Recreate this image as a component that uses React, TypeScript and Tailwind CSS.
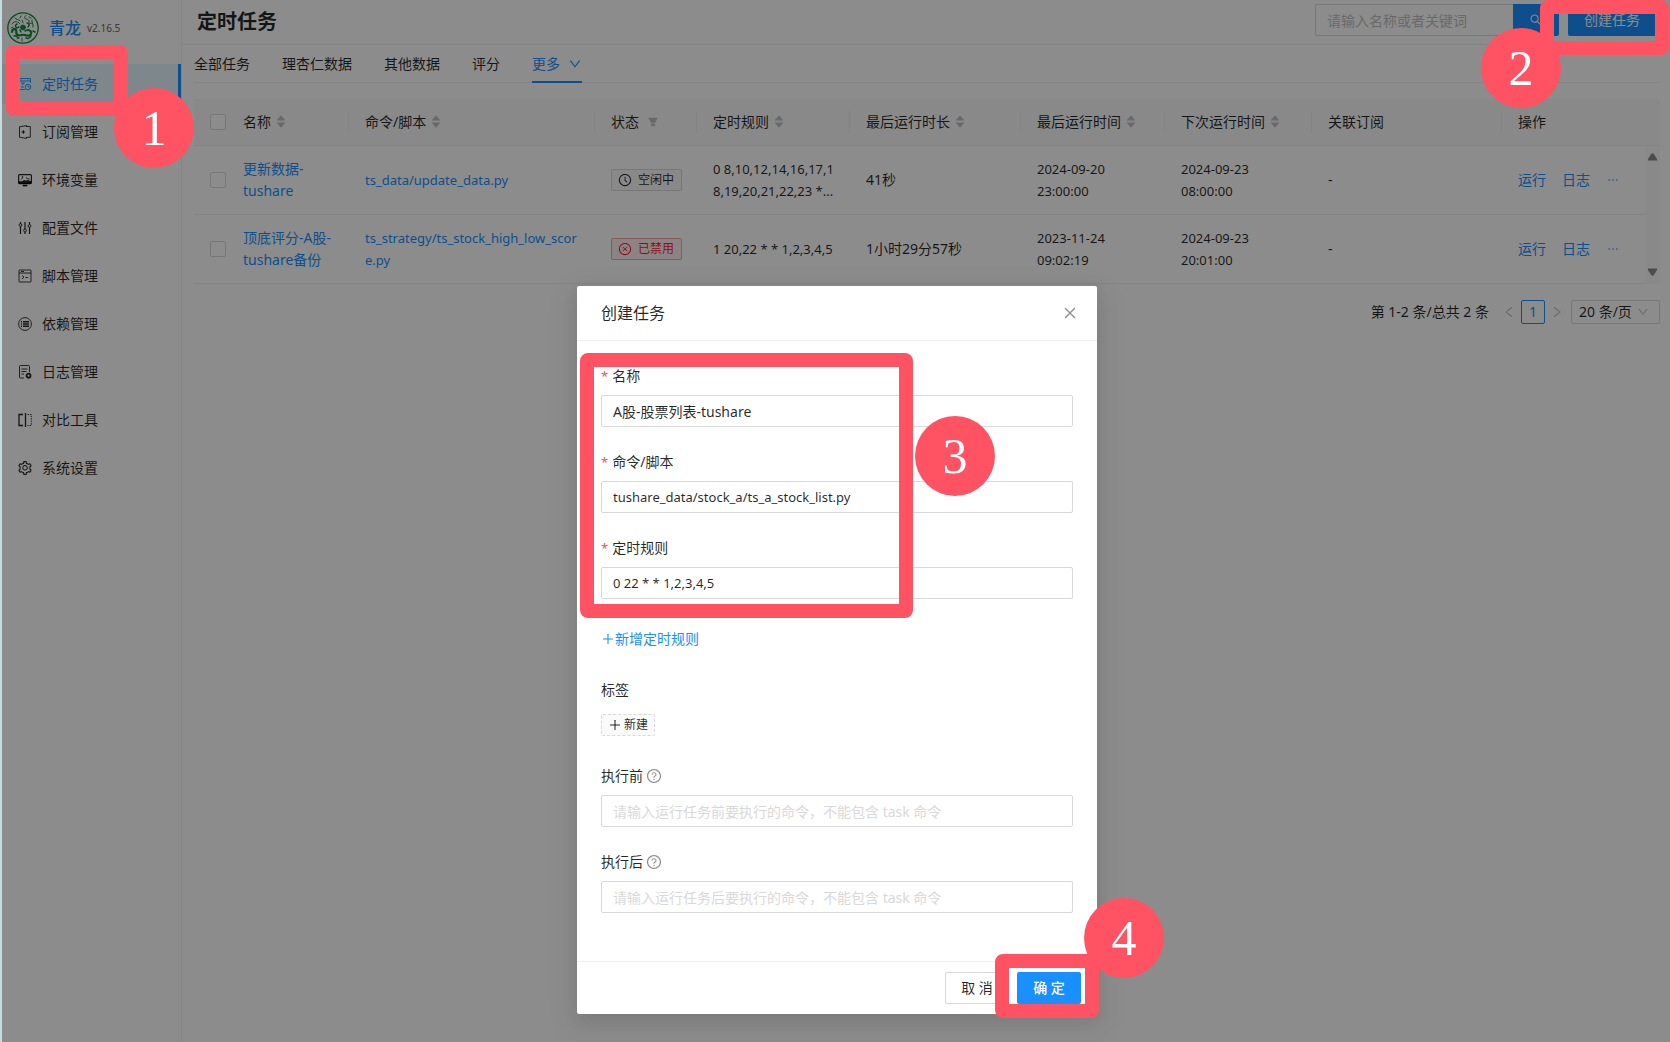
import React from 'react'
import {
    AiFillCaretDown,
    AiFillCaretUp,
    AiFillFilter,
    AiOutlineClockCircle,
    AiOutlineClose,
    AiOutlineCloseCircle,
    AiOutlineDown,
    AiOutlineEllipsis,
    AiOutlineLeft,
    AiOutlinePlus,
    AiOutlineQuestionCircle,
    AiOutlineRight,
    AiOutlineSearch,
    AiOutlineSetting,
} from 'react-icons/ai'

type IconProps = { children: React.ReactNode }

const MenuIcon = ({ children }: IconProps) => (
    <svg className="w-3.5 h-3.5 shrink-0" viewBox="0 0 14 14" fill="none" stroke="currentColor" strokeWidth=".9">
        {children}
    </svg>
)

const menu = [
    {
        label: '定时任务',
        icon: (
            <MenuIcon>
                <path d="M12.5 6V1.5H.5v11H7M.5 4h12M3 2.5v.8M10 2.5v.8M3 6h3.5L4 8M3 10h3" />
                <circle cx="10" cy="10" r="2.8" />
                <path d="M10 8.5V10h1.5" />
            </MenuIcon>
        ),
    },
    {
        label: '订阅管理',
        icon: (
            <MenuIcon>
                <path d="M8.5 2V.6L1.500 1.800v10.400L8.500 13.400V12" />
                <path d="M8.500 1.500h3.800v10.800H8.500" />
                <path d="M3.500 7h3.600M5.300 5.200v3.600" strokeWidth="1.200" />
            </MenuIcon>
        ),
    },
    {
        label: '环境变量',
        icon: (
            <MenuIcon>
                <rect x=".6" y="1.600" width="12.800" height="9" rx="1" strokeWidth="1.200" />
                <path d="M1 8.800h3l2-1.300 2 .6 2-.6 3 1.300v1.700H1zM5 12.200h4v.8H5z" fill="currentColor" />
                <path d="M3 6.500l1.500-1.500M8 4.500l2 1.500h1.500" />
                <circle cx="4.500" cy="4" r=".5" />
            </MenuIcon>
        ),
    },
    {
        label: '配置文件',
        icon: (
            <MenuIcon>
                <path d="M2.500 1v1.500M2.500 5.500V13M7 1v7M7 11v2M11.500 1v2.500M11.500 6.500V13" strokeWidth="1.200" />
                <circle cx="2.500" cy="4" r="1.400" />
                <circle cx="7" cy="9.500" r="1.400" />
                <circle cx="11.500" cy="5" r="1.400" />
            </MenuIcon>
        ),
    },
    {
        label: '脚本管理',
        icon: (
            <MenuIcon>
                <rect x="1" y="1" width="12" height="12" rx=".5" />
                <path d="M1 4h12M3 2.500h3M4 6.500l2 1.700-2 1.800M7.500 8.500h2.500" />
            </MenuIcon>
        ),
    },
    {
        label: '依赖管理',
        icon: (
            <MenuIcon>
                <circle cx="7" cy="7" r="6.400" />
                <path d="M3 4.700h1M3 7h1M3 9.300h1M5 4.700h6M5 7h6M5 9.300h6" strokeWidth="1.600" />
            </MenuIcon>
        ),
    },
    {
        label: '日志管理',
        icon: (
            <MenuIcon>
                <path d="M11.500 7V1.500a1 1 0 0 0-1-1h-8a1 1 0 0 0-1 1v10.500a1 1 0 0 0 1 1H6M3.500 4h6M3.500 6.500h5M3.500 9H6" />
                <circle cx="10.500" cy="10.700" r="2" strokeWidth="1.800" />
            </MenuIcon>
        ),
    },
    {
        label: '对比工具',
        icon: (
            <MenuIcon>
                <path d="M5 1.500H1v11h4" strokeWidth="1.300" />
                <path d="M7.500 0v14" strokeWidth="1.300" />
                <path d="M9.500 1.500h3.800v11H9.500" strokeDasharray="1.500 1" />
            </MenuIcon>
        ),
    },
    { label: '系统设置', icon: <AiOutlineSetting className="w-4 h-4 -mx-px shrink-0" /> },
]

const columns = [
    { title: '名称', width: 'w-[122px]', sort: true },
    { title: '命令/脚本', width: 'w-[246px]', sort: true },
    { title: '状态', width: 'w-[102px]', filter: true },
    { title: '定时规则', width: 'w-[153px]', sort: true },
    { title: '最后运行时长', width: 'w-[171px]', sort: true },
    { title: '最后运行时间', width: 'w-[144px]', sort: true },
    { title: '下次运行时间', width: 'w-[147px]', sort: true },
    { title: '关联订阅', width: '' },
    { title: '操作', width: 'w-[143px]' },
]

const tasks = [
    {
        name: '更新数据-tushare',
        command: 'ts_data/update_data.py',
        disabled: false,
        rule: '0 8,10,12,14,16,17,18,19,20,21,22,23 *...',
        duration: '41秒',
        last: ['2024-09-20', '23:00:00'],
        next: ['2024-09-23', '08:00:00'],
    },
    {
        name: '顶底评分-A股-tushare备份',
        command: 'ts_strategy/ts_stock_high_low_score.py',
        disabled: true,
        rule: '1 20,22 * * 1,2,3,4,5',
        duration: '1小时29分57秒',
        last: ['2023-11-24', '09:02:19'],
        next: ['2024-09-23', '20:01:00'],
    },
]

const Frame = ({ className }: { className: string }) => (
    <span className={`absolute z-30 pointer-events-none rounded-lg border-14 border-[#ff5263] ${className}`} />
)

const Step = ({ n, className }: { n: number; className: string }) => (
    <span
        className={`absolute z-30 pointer-events-none flex items-center justify-center w-20 h-20 rounded-full bg-[#ff5263] text-white font-['Liberation_Serif',serif] text-[50px] leading-none ${className}`}
    >
        {n}
    </span>
)

const Logo = () => (
    <svg className="w-8 h-8 shrink-0" viewBox="0 0 32 32" fill="none" stroke="#128a3e" strokeLinecap="round">
        <circle cx="16" cy="16" r="15.200" strokeWidth="1.300" />
        <circle cx="16" cy="15.500" r="2.400" fill="#128a3e" />
        <path d="M8 6c1 2 4 1 5 3M19 3.500c-2 1-2 3 0 3.500s4 1 3 3.500M5 12c1-2 3-3 5-2M25 8c-1 2 2 4 1 7M14 4l-1 2M22 5l2 1" strokeWidth="1" />
        <path d="M5 20c0-3 3-4 4-2s-1 4 2 5 5-1 7 0 5 1 6-1-1-4-3-4" strokeWidth="2.200" />
        <path d="M10 12c-2 1-2 3 0 4l2-1M20 11c2 0 3 2 1 4M7 24c2-1 3 1 5 2M19 26c2 1 4 0 5-2M26 19l2 1M13 18l1 2M18 19l2-1" strokeWidth="1.500" />
        <path d="M15 8l1 3M11 10l2 2M22 12l3-1M6 15l-2 1M15 26v3M10 27l1-1" strokeWidth=".9" />
    </svg>
)

const Sorter = () => (
    <span className="flex flex-col text-[#bfbfbf]">
        <AiFillCaretUp className="w-3 h-3 -mb-1" />
        <AiFillCaretDown className="w-3 h-3 -mt-px" />
    </span>
)

const Checkbox = ({ label }: { label: string }) => (
    <input type="checkbox" aria-label={label} className="block w-4 h-4 appearance-none rounded-xs border border-[#d9d9d9] bg-white" />
)

const Sidebar = () => (
    <aside className="w-[180px] shrink-0 border-r border-[#f0f0f0]">
        <div className="flex items-center h-14 pl-[5px]">
            <Logo />
            <a href="#" className="ml-2.5 text-base font-medium text-[#1890ff]">青龙</a>
            <span className="ml-1.5 text-[10px] text-[#666]">v2.16.5</span>
        </div>
        <nav className="mt-2">
            {menu.map((item, i) => (
                <div key={item.label} className="relative mb-2">
                    <a
                        href="#"
                        className={
                            i === 0
                                ? 'flex items-center h-10 gap-2.5 pl-4 bg-[#e6f7ff] border-r-3 border-[#1890ff] text-[#1890ff]'
                                : 'flex items-center h-10 gap-2.5 pl-4'
                        }
                    >
                        {item.icon}
                        {item.label}
                    </a>
                    {i === 0 && (
                        <>
                            <Frame className="left-1 -top-[19px] w-[122px] h-[71px]" />
                            <Step n={1} className="left-28 top-6" />
                        </>
                    )}
                </div>
            ))}
        </nav>
    </aside>
)

const Header = () => (
    <header className="flex items-start justify-between h-[45px] pt-1 pl-[15px] pr-3.5 border-b border-[#f0f0f0]">
        <h1 className="text-xl leading-9 font-bold">定时任务</h1>
        <div className="flex">
            <input
                type="search"
                aria-label="搜索任务"
                placeholder="请输入名称或者关键词"
                className="w-[198px] h-8 px-[11px] rounded-l-xs border border-r-0 border-[#d9d9d9] placeholder:text-[#bfbfbf]"
            />
            <button aria-label="搜索" className="flex items-center justify-center w-[46px] h-8 rounded-r-xs bg-[#1890ff] text-white">
                <AiOutlineSearch className="w-3.5 h-3.5" />
            </button>
            <div className="relative ml-[9px]">
                <button className="h-8 px-4 rounded-xs bg-[#1890ff] text-white">创建任务</button>
                <Frame className="-left-7 -top-1 w-[129px] h-[55px]" />
                <Step n={2} className="-left-[87px] top-6" />
            </div>
        </div>
    </header>
)

const TaskTable = () => (
    <div className="flex mt-4">
        <table className="flex-1 w-full table-fixed text-left">
            <thead>
                <tr className="h-[46px] bg-[#fafafa] border-b border-[#f0f0f0]">
                    <th className="w-[33px] pl-4"><Checkbox label="全选" /></th>
                    {columns.map((col, i) => (
                        <th key={col.title} className={`p-0 font-normal ${col.width}`}>
                            <div className={i < columns.length - 1 ? 'flex items-center h-[22px] px-4 border-r border-[#f0f0f0]' : 'flex items-center h-[22px] px-4'}>
                                {col.title}
                                {col.sort && <span className="ml-1"><Sorter /></span>}
                                {col.filter && <AiFillFilter className="ml-2 w-3 h-3 text-[#bfbfbf]" />}
                            </div>
                        </th>
                    ))}
                </tr>
            </thead>
            <tbody>
                {tasks.map((task) => (
                    <tr key={task.name} className="h-[69px] border-b border-[#f0f0f0]">
                        <td className="pl-4"><Checkbox label={task.name} /></td>
                        <td className="px-4"><a href="#" className="text-[#1890ff]">{task.name}</a></td>
                        <td className="px-4 break-all"><a href="#" className="text-[13px] text-[#1890ff]">{task.command}</a></td>
                        <td className="px-4">
                            {task.disabled ? (
                                <span className="flex items-center w-[71px] h-[22px] gap-1.5 px-1.5 rounded-xs border border-[#ffa39e] bg-[#fff1f0] text-xs text-[#f5222d] whitespace-nowrap">
                                    <AiOutlineCloseCircle className="w-3.5 h-3.5 shrink-0" />已禁用
                                </span>
                            ) : (
                                <span className="flex items-center w-[71px] h-[22px] gap-1.5 px-1.5 rounded-xs border border-[#d9d9d9] bg-[#fafafa] text-xs whitespace-nowrap">
                                    <AiOutlineClockCircle className="w-3.5 h-3.5 shrink-0" />空闲中
                                </span>
                            )}
                        </td>
                        <td className="px-4 text-[13px] break-all">{task.rule}</td>
                        <td className="px-4">{task.duration}</td>
                        <td className="px-4 text-[13px]">{task.last[0]}<br />{task.last[1]}</td>
                        <td className="px-4 text-[13px]">{task.next[0]}<br />{task.next[1]}</td>
                        <td className="px-4">-</td>
                        <td className="px-4">
                            <div className="flex items-center gap-4 text-[#1890ff]">
                                <a href="#">运行</a>
                                <a href="#">日志</a>
                                <a href="#" aria-label="更多"><AiOutlineEllipsis className="w-3.5 h-3.5" /></a>
                            </div>
                        </td>
                    </tr>
                ))}
            </tbody>
        </table>
        <div className="flex flex-col w-[15px] bg-[#fafafa] text-[#8a8a8a]">
            <div className="h-[47px] border-b border-[#f0f0f0]" />
            <div className="flex flex-col flex-1 items-center justify-between pt-[7px] pb-2">
                <svg className="w-[9px] h-2" viewBox="0 0 9 8" fill="currentColor"><path d="M3.500.5h2L9 6v1.500H0V6z" /></svg>
                <svg className="w-[9px] h-2" viewBox="0 0 9 8" fill="currentColor"><path d="M3.500 7.500h2L9 2V.5H0V2z" /></svg>
            </div>
        </div>
    </div>
)

const Pagination = () => (
    <div className="flex items-center justify-end mt-4">
        <span className="mr-2">第 1-2 条/总共 2 条</span>
        <button aria-label="上一页" className="flex items-center justify-center w-6 h-6 text-[#bfbfbf]"><AiOutlineLeft className="w-3.5 h-3.5" /></button>
        <button className="flex items-center justify-center w-6 h-6 rounded-xs border border-[#1890ff] text-[#1890ff]">1</button>
        <button aria-label="下一页" className="flex items-center justify-center w-6 h-6 text-[#bfbfbf]"><AiOutlineRight className="w-3.5 h-3.5" /></button>
        <div className="relative ml-0.5">
            <select aria-label="每页条数" className="block w-[89px] h-6 pl-[7px] appearance-none rounded-xs border border-[#d9d9d9] bg-white">
                <option>20 条/页</option>
            </select>
            <AiOutlineDown className="absolute right-[11px] top-1.5 w-3 h-3 text-[#bfbfbf] pointer-events-none" />
        </div>
    </div>
)

type FieldProps = { id: string; label: string; value?: string; placeholder?: string; required?: boolean; help?: boolean; latin?: boolean }

const Field = ({ id, label, value, placeholder, required, help, latin }: FieldProps) => (
    <div className="mb-6">
        <label htmlFor={id} className="flex items-center h-[22px] mb-2">
            {required && <span className="mr-1 text-[13px] text-[#ff4d4f]">*</span>}
            {label}
            {help && <AiOutlineQuestionCircle className="ml-[3px] w-4 h-4 text-[#8c8c8c]" />}
        </label>
        <input
            id={id}
            defaultValue={value}
            placeholder={placeholder}
            className={`block w-full h-8 px-[11px] rounded-xs border border-[#d9d9d9] placeholder:text-[#d9d9d9] ${latin ? 'text-[13px]' : ''}`}
        />
    </div>
)

const CreateModal = () => (
    <div className="absolute inset-0 z-20 flex items-start justify-center pt-[286px] pl-0.5 bg-black/45">
        <div role="dialog" aria-label="创建任务" className="relative w-[520px] rounded-xs bg-white shadow-[0_6px_16px_rgba(0,0,0,0.08),0_9px_28px_8px_rgba(0,0,0,0.05)]">
            <div className="flex items-center justify-between h-[55px] pl-6 pr-[19px] border-b border-[#f0f0f0]">
                <h2 className="text-base">创建任务</h2>
                <button aria-label="关闭" className="text-[#8c8c8c]"><AiOutlineClose className="w-4 h-4" /></button>
            </div>
            <form className="p-6">
                <div className="relative">
                    <Field id="name" label="名称" value="A股-股票列表-tushare" required />
                    <Field id="command" label="命令/脚本" value="tushare_data/stock_a/ts_a_stock_list.py" required latin />
                    <Field id="schedule" label="定时规则" value="0 22 * * 1,2,3,4,5" required latin />
                    <Frame className="-left-[21px] -top-3 w-[333px] h-[265px]" />
                    <Step n={3} className="left-[314px] top-[51px]" />
                </div>
                <button type="button" className="flex items-center h-8 mb-6 text-[#1890ff]">
                    <AiOutlinePlus className="w-3.5 h-3.5" />新增定时规则
                </button>
                <div className="h-[22px] mb-[13px]">标签</div>
                <button type="button" className="flex items-center h-[22px] mb-[29px] gap-0.5 px-1.5 rounded-xs border border-dashed border-[#d9d9d9] bg-[#fafafa] text-xs">
                    <AiOutlinePlus className="w-3.5 h-3.5" />新建
                </button>
                <Field id="before" label="执行前" placeholder="请输入运行任务前要执行的命令，不能包含 task 命令" help />
                <Field id="after" label="执行后" placeholder="请输入运行任务后要执行的命令，不能包含 task 命令" help />
            </form>
            <div className="flex justify-end gap-2 px-4 py-2.5 border-t border-[#f0f0f0]">
                <button className="w-16 h-8 rounded-xs border border-[#d9d9d9]">取 消</button>
                <div className="relative">
                    <button className="w-16 h-8 rounded-xs bg-[#1890ff] font-medium text-white">确 定</button>
                    <Frame className="-left-[22px] -top-[18px] w-[104px] h-16" />
                    <Step n={4} className="left-[67px] -top-[74px]" />
                </div>
            </div>
        </div>
    </div>
)

const App = () => {
    return (
        <div className="min-h-screen flex border-l-2 border-[#c3dde2] overflow-hidden">
            <div className="relative flex flex-1 min-w-0 bg-white font-['Noto_Sans','Noto_Sans_CJK_SC',sans-serif] text-sm leading-[22px] text-black/85">
                <Sidebar />
                <main className="flex-1 min-w-0">
                    <Header />
                    <div className="pl-3 pr-2.5">
                        <div className="flex gap-8 border-b border-[#f0f0f0]">
                            <button className="py-2 -mb-px">全部任务</button>
                            <button className="py-2 -mb-px">理杏仁数据</button>
                            <button className="py-2 -mb-px">其他数据</button>
                            <button className="py-2 -mb-px">评分</button>
                            <button className="flex items-center gap-2 pt-2 pb-1.5 -mb-px border-b-2 border-[#1890ff] text-[#1890ff]">
                                更多<AiOutlineDown className="w-3.5 h-3.5" />
                            </button>
                        </div>
                        <TaskTable />
                        <Pagination />
                    </div>
                </main>
                <CreateModal />
            </div>
        </div>
    )
}

export default App
